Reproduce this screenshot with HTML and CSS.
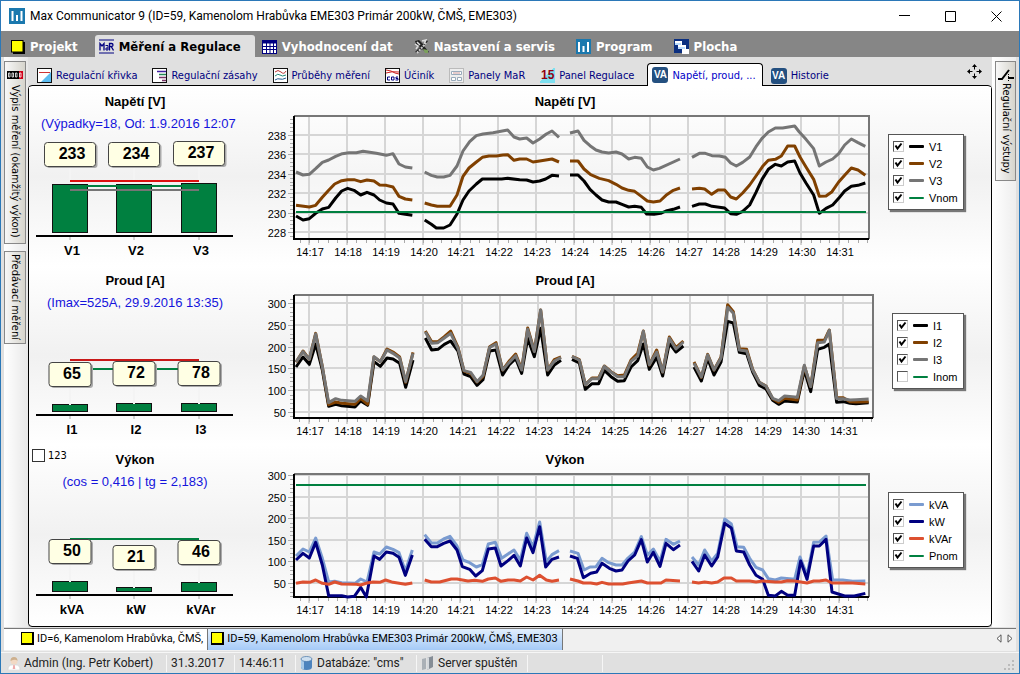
FILE: index.html
```html
<!DOCTYPE html>
<html lang="cs">
<head>
<meta charset="utf-8">
<title>Max Communicator 9</title>
<link rel="stylesheet" href="styles.css">
</head>
<body>
<div class="window">
  <header class="titlebar">
    <svg class="app-icon" viewBox="0 0 16 16"><rect width="16" height="16" fill="#1a78ae"/><path d="M3.500 3v10M8 7v6M12.500 3v10" stroke="#fff" stroke-width="2"/></svg>
    <h1>Max Communicator 9 (ID=59, Kamenolom Hrabůvka EME303 Primár 200kW, ČMŠ, EME303)</h1>
    <div class="controls">
      <button aria-label="Minimalizovat"><svg viewBox="0 0 11 11"><path d="M0 4.500h11"/></svg></button>
      <button aria-label="Maximalizovat"><svg viewBox="0 0 11 11"><path d="M.5 .5h10v10h-10z"/></svg></button>
      <button aria-label="Zavřít"><svg viewBox="0 0 11 11"><path d="M.5 .5l10 10M10.500 .5l-10 10"/></svg></button>
    </div>
  </header>

  <nav class="menu">
    <button><svg viewBox="0 0 15 15"><path d="M3 3h12v12H3z"/><rect x="1.500" y="1.500" width="11.500" height="11.500" fill="#ff0" stroke="#000"/></svg>Projekt</button>
    <button class="active"><svg viewBox="0 0 15 15"><path d="M0 1h15M0 14h15" stroke="#000080"/><path d="M1 11.500V4.500l2 2.500 2-2.500v7M10.500 11.500V4.500h2q1.500 0 1.500 1.500t-1.500 1.500h-2M12.500 8l2 3.500" stroke="#000080" stroke-width="1.300" fill="none"/><path d="M6.500 6.500H9V11H7V9h2" stroke="#000080" fill="none"/></svg>Měření a Regulace</button>
    <button><svg viewBox="0 0 15 15"><rect x=".5" y="1.500" width="14" height="13" fill="#fff" stroke="#000080"/><path d="M0 3h15" stroke="#000080" stroke-width="3"/><path d="M0 7.500h15M0 10.500h15M4.500 4v11M8 4v11M11.500 4v11" stroke="#000080"/></svg>Vyhodnocení dat</button>
    <button><svg viewBox="0 0 15 15"><path d="M1 2l4-1 4 4 3-4 2 1-4 5 5 6-2 1-5-4-4 4-3-1 5-5-4-3z" fill="#222"/><path d="M1 5l3 2-2 3M8 2l4-1-2 4M3 3l3 3" stroke="#ddd" fill="none" stroke-width="1.500"/><path d="M3 14l9-10" stroke="#ccc" stroke-width="2" stroke-dasharray="2 1"/><path d="M9 10l5 1v3h-3z" fill="#7ba05b"/></svg>Nastavení a servis</button>
    <button><svg viewBox="0 0 15 15"><rect width="15" height="15" fill="#1a78ae"/><path d="M3 3v10M7.500 7v6M12 3v10" stroke="#fff" stroke-width="2"/></svg>Program</button>
    <button><svg viewBox="0 0 15 15"><rect width="15" height="14" fill="#0b2f80"/><path d="M1 2h7v4H1zM4 6h8v4H4zM8 10h7v5H8z" fill="#fff"/><path d="M1 4h6v2H1zM4 8h7v2H4z" fill="#bdf"/></svg>Plocha</button>
  </nav>

  <main class="workspace">
    <aside class="rail rail-left">
      <button class="rail-tab tall"><svg viewBox="0 0 16 10"><rect y="1" width="13" height="8" fill="#000"/><rect x="12" y="1" width="4" height="8" fill="#d00018"/><path d="M1.500 3h1.500v4H1.500zM5 3h1.500v4H5zM8.500 3H10v4H8.500zM12.500 3H14v4h-1.500z" fill="none" stroke="#fff" stroke-width=".8"/></svg><span>Výpis měření (okamžitý výkon)</span></button>
      <button class="rail-tab"><span>Předávací měření</span></button>
    </aside>

    <section class="content">
      <nav class="tabs">
        <button><svg viewBox="0 0 15 15"><rect x=".5" y=".5" width="14" height="14" fill="#fff" stroke="#111"/><path d="M14 4v10H4z" fill="#5cbcf0"/><path d="M2 4.500h11" stroke="#c33"/></svg>Regulační křivka</button>
        <button><svg viewBox="0 0 15 15"><rect x=".5" y=".5" width="14" height="14" fill="#fff" stroke="#111"/><path d="M5 3.500h9" stroke="#4020a0" stroke-width="1.500"/><path d="M7 6.500h7" stroke="#285" stroke-width="1.500"/><path d="M7 9.500h7M10 12.500h4" stroke="#736" stroke-width="1.500"/></svg>Regulační zásahy</button>
        <button><svg viewBox="0 0 15 15"><rect x=".5" y=".5" width="14" height="14" fill="#fff" stroke="#111"/><path d="M2 4q3-3 6 0t5-1" stroke="#b33" fill="none"/><path d="M2 8q3-3 5-1t6 0" stroke="#287" fill="none"/><path d="M2 12q3-2 5-1t6-1" stroke="#235a90" fill="none"/></svg>Průběhy měření</button>
        <button><svg viewBox="0 0 15 15"><rect x=".5" y=".5" width="14" height="14" fill="#fff" stroke="#111"/><path d="M1 2l5 1 4 2 4 1M1 5q6-2 13-1" stroke="#c22" fill="none"/><path d="M5 9H2.500v3H5M6.500 9H9v3H6.500zM13 9h-2v1.500h2V12h-2.500" stroke="#000080" fill="none"/></svg>Účiník</button>
        <button><svg viewBox="0 0 15 15"><rect x=".5" y=".5" width="14" height="14" fill="#eee" stroke="#bbb"/><path d="M2.500 3.500h10v3h-10zM2.500 9.500h4v3h-4zM8.500 9.500h4v3h-4z" fill="#fff" stroke="#9ab"/><path d="M4 5h7" stroke="#c99"/></svg>Panely MaR</button>
        <button><span class="fifteen">15</span>Panel Regulace</button>
        <button class="active"><span class="va">VA</span>Napětí, proud, ...</button>
        <button><span class="va">VA</span>Historie</button>
        <button class="move" aria-label="Přesunout"><svg viewBox="0 0 15 15"><path d="M7.500 0l2.500 3H5zM7.500 15L5 12h5zM0 7.500L3 5v5zM15 7.500L12 10V5z"/><path d="M7.500 2v3.500M7.500 9.500V13M2 7.500h3.500M9.500 7.500H13" stroke="#000"/></svg></button>
      </nav>

      <div class="panel">
        <section class="row">
          <div class="bars">
            <h2>Napětí [V]</h2>
            <p class="long">(Výpadky=18, Od: 1.9.2016 12:07</p>
            <svg class="bar-chart" data-bars="voltage" viewBox="0 0 212 132"></svg>
          </div>
          <div class="trend"><h2>Napětí [V]</h2><svg class="line-chart" data-chart="voltage" viewBox="0 0 624 154"></svg></div>
          <div class="legend">
            <label><input type="checkbox" checked><i class="key black"></i>V1</label>
            <label><input type="checkbox" checked><i class="key brown"></i>V2</label>
            <label><input type="checkbox" checked><i class="key gray"></i>V3</label>
            <label><input type="checkbox" checked><i class="key green"></i>Vnom</label>
          </div>
        </section>
        <section class="row">
          <div class="bars">
            <h2>Proud [A]</h2>
            <p>(Imax=525A, 29.9.2016 13:35)</p>
            <svg class="bar-chart" data-bars="current" viewBox="0 0 212 132"></svg>
          </div>
          <div class="trend"><h2>Proud [A]</h2><svg class="line-chart" data-chart="current" viewBox="0 0 624 154"></svg></div>
          <div class="legend narrow">
            <label><input type="checkbox" checked><i class="key black"></i>I1</label>
            <label><input type="checkbox" checked><i class="key brown"></i>I2</label>
            <label><input type="checkbox" checked><i class="key gray"></i>I3</label>
            <label><input type="checkbox"><i class="key green"></i>Inom</label>
          </div>
        </section>
        <section class="row">
          <div class="bars">
            <div class="bars-head"><label class="phases"><input type="checkbox">123</label><h2>Výkon</h2></div>
            <p>(cos = 0,416 | tg = 2,183)</p>
            <svg class="bar-chart" data-bars="power" viewBox="0 0 212 132"></svg>
          </div>
          <div class="trend"><h2>Výkon</h2><svg class="line-chart" data-chart="power" viewBox="0 0 624 154"></svg></div>
          <div class="legend">
            <label><input type="checkbox" checked><i class="key sky"></i>kVA</label>
            <label><input type="checkbox" checked><i class="key navy"></i>kW</label>
            <label><input type="checkbox" checked><i class="key red"></i>kVAr</label>
            <label><input type="checkbox" checked><i class="key green"></i>Pnom</label>
          </div>
        </section>
      </div>
    </section>

    <aside class="rail rail-right">
      <button class="rail-tab"><svg viewBox="0 0 16 16"><path d="M0 13h4L11 4" stroke="#000" stroke-width="2" fill="none"/><path d="M10 12h6" stroke="#000" stroke-width="2"/><path d="M10.500 8v8" stroke="#000" stroke-dasharray="1 1"/></svg><span>Regulační výstupy</span></button>
    </aside>
  </main>

  <nav class="documents">
    <button class="doc"><i class="square"></i>ID=6, Kamenolom Hrabůvka, ČMŠ,</button>
    <button class="doc current"><i class="square"></i>ID=59, Kamenolom Hrabůvka EME303 Primár 200kW, ČMŠ, EME303</button>
    <span class="scroll">
      <button aria-label="Vlevo"><svg viewBox="0 0 6 9"><path d="M5 .8v7.400L1 4.500z"/></svg></button>
      <button aria-label="Vpravo"><svg viewBox="0 0 6 9"><path d="M1 .8v7.400l4-3.700z"/></svg></button>
    </span>
  </nav>

  <footer class="status">
    <span class="cell user"><svg viewBox="0 0 14 14"><path d="M1 14q0-5 4-5h4q4 0 4 5z" fill="#fff" stroke="#ccc" stroke-width=".5"/><circle cx="7" cy="5" r="3.500" fill="#f2d9c4"/><path d="M3.500 5q0-4 3.500-4t3.500 4q-2-2.500-7 0z" fill="#cdb08e"/><path d="M6.300 9h1.400l.6 4h-2.600z" fill="#eaa"/></svg>Admin (Ing. Petr Kobert)</span>
    <span class="cell date">31.3.2017</span>
    <span class="cell time">14:46:11</span>
    <span class="cell db"><svg viewBox="0 0 14 14"><path d="M1 3v8q0 3 5.500 3T12 11V3z" fill="#4d83bd"/><path d="M1 3v8q0 2 3 2.600V3z" fill="#a8c9e8"/><ellipse cx="6.500" cy="3" rx="5.500" ry="2.500" fill="#cfe0f0" stroke="#4474a8" stroke-width=".7"/></svg>Databáze: "cms"</span>
    <span class="cell server"><svg viewBox="0 0 14 14"><path d="M1 3l4-1v11l-4 1z" fill="#aab0b6"/><path d="M6 2l6-2v11l-6 3z" fill="#858d96"/><path d="M6 2l2-.6V13l-2 1z" fill="#d4d8dc"/></svg>Server spuštěn</span>
    <span class="cell spare"></span>
    <svg class="grip" viewBox="0 0 11 11"><path d="M8 0h2v2H8zM4 4h2v2H4zM8 4h2v2H8zM0 8h2v2H0zM4 8h2v2H4zM8 8h2v2H8z" fill="#bbb"/></svg>
  </footer>
</div>
<script src="charts.js"></script>
</body>
</html>
```

FILE: styles.css
```css
* { box-sizing: border-box; }
body { margin: 0; font: 11px "DejaVu Sans Condensed", "DejaVu Sans", sans-serif; color: #000; }
h1, h2, p { margin: 0; }
button { margin: 0; padding: 0; border: 0; background: none; font: inherit; color: inherit; white-space: nowrap; }
svg { display: block; flex: none; }

.window { display: flex; flex-direction: column; min-height: 100vh; border: 1px solid #2b78b8; background: #e0e0e0; }

.titlebar { display: flex; align-items: center; height: 30px; padding-left: 8px; gap: 5px; background: #fff; }
.app-icon { width: 16px; height: 16px; }
.titlebar h1 { flex: 1; font: 12px Roboto, sans-serif; white-space: nowrap; }
.controls { display: flex; }
.controls button { display: grid; place-items: center; width: 46px; height: 29px; }
.controls svg { width: 11px; height: 11px; fill: none; stroke: #000; }

.menu { display: flex; height: 26px; padding: 4px 0 0 5px; gap: 3px; background: #868686; }
.menu button { display: flex; align-items: center; gap: 5px; padding: 0 14px 0 4px; font-size: 13px; font-weight: bold; color: #fff; }
.menu svg { width: 15px; height: 15px; }
.menu .active { background: #e0e0e0; color: #000; border-radius: 3px 3px 0 0; }

.workspace { flex: 1; display: grid; grid-template-columns: 24px minmax(0, 1fr) 24px; padding: 0 3px; }
.rail { padding-top: 4px; background: linear-gradient(90deg, #fff, #eee); }
.rail-left { display: flex; flex-direction: column; gap: 7px; background: linear-gradient(90deg, #fff, #e8e8e8); }
.rail-right { padding-left: 3px; }
.rail-tab { display: flex; flex-direction: column; align-items: center; gap: 5px; width: 22px; height: 93px; padding-top: 2px; border: 1px solid #888; background: linear-gradient(90deg, #f8f8f8, #d6d4cc); }
.rail-tab.tall { height: 183px; padding-top: 8px; }
.rail-right .rail-tab { width: 21px; height: 120px; padding-top: 4px; gap: 1px; }
.rail-tab span { writing-mode: vertical-rl; line-height: 16px; }
.rail-tab svg { width: 16px; }

.content { display: flex; flex-direction: column; }
.tabs { display: flex; align-items: flex-end; height: 28px; padding-left: 9px; gap: 15px; color: #000080; }
.tabs button { display: flex; align-items: center; gap: 4px; height: 19px; }
.tabs svg { width: 15px; height: 15px; }
.tabs .active { position: relative; height: 23px; margin: 0 -7px -1px -2px; padding: 0 6px 0 4px; border: 1px solid #000; border-bottom: 0; border-radius: 4px 4px 0 0; background: #fff; color: #0000c8; }
.tabs .move { margin: 0 10px 4px auto; }
.va { width: 16px; height: 16px; border-radius: 3px; background: #245080; color: #fff; font: bold 10px/16px "Liberation Sans", sans-serif; text-align: center; }
.fifteen { width: 15px; height: 15px; background: linear-gradient(135deg, #e0e0e0 45%, #7de0f0 46%); color: #900010; font: bold 12px/15px "Liberation Sans", sans-serif; text-align: center; }

.panel { flex: 1; padding: 1px 0 2px; border: 1px solid #000; border-radius: 4px; background: #fff; }
.row { display: grid; grid-template-columns: 212px minmax(0, 1fr) 114px; background: linear-gradient(#fff, #f1f1f1 50%, #fff); }
.row h2 { padding-top: 5px; font: bold 13px/20px "Liberation Sans", sans-serif; text-align: center; }
.bars { font: 13px/20px "Liberation Sans", sans-serif; }
.bars p { padding-top: 2px; color: #1414dc; text-align: center; white-space: nowrap; }
.bars .long { padding-left: 12px; text-align: left; }
.bars-head { display: grid; }
.bars-head > * { grid-area: 1 / 1; }
.phases { display: flex; align-items: center; justify-self: start; gap: 3px; padding-left: 3px; height: 20px; font: 11px "DejaVu Sans Condensed", sans-serif; }
.phases input { appearance: none; width: 13px; height: 13px; margin: 0; border: 1px solid #333; background: #fff; }
.bar-chart { width: 100%; }
.trend { padding-left: 12px; }
.line-chart { width: 100%; }

.legend { justify-self: end; align-self: start; width: 76px; margin: 47px 27px 0 0; padding: 3px 4px; border: 1px solid #555; background: #fff; box-shadow: 2px 2px 1px #777; font: 11px "Liberation Sans", sans-serif; }
.legend.narrow { width: 72px; }
.legend label { display: flex; align-items: center; height: 17px; gap: 5px; }
.legend input { appearance: none; width: 11px; height: 11px; margin: 0; border: 1px solid #ccc; border-top-color: #555; border-left-color: #555; }
.legend input:checked { background: url("data:image/svg+xml,%3Csvg xmlns='http://www.w3.org/2000/svg' viewBox='0 0 9 9'%3E%3Cpath d='M1.500 3.500l2 3 4-5' fill='none' stroke='%23000' stroke-width='2'/%3E%3C/svg%3E"); }
.key { width: 15px; height: 3px; border-radius: 1px; }
.black { background: #000; }
.brown { background: #804000; }
.gray { background: #757575; }
.green { height: 2px; background: #008040; }
.sky { background: #7a9bd0; }
.navy { background: #000080; }
.red { background: #dd5030; }

.documents { display: flex; height: 23px; margin: 1px 3px 0; border-top: 1px solid #777; background: #f0f0f0; }
.doc { display: flex; align-items: center; gap: 3px; height: 21px; padding: 0 4px 2px 3px; border-right: 1px solid #777; background: #fff; font: 11px Roboto, sans-serif; }
.doc:first-child { padding-left: 17px; }
.doc.current { background: linear-gradient(#e2effd, #a5caf7); }
.square { width: 13px; height: 13px; border: 1px solid #000; border-width: 1px 2px 2px 1px; background: #ff0; }
.scroll { display: flex; gap: 5px; margin-left: auto; padding: 0 3px 4px; }
.scroll svg { width: 6px; height: 9px; fill: #fff; stroke: #555; }

.status { display: flex; align-items: center; height: 21px; margin-top: 1px; border-top: 1px solid #f6f6f6; font: 12px Roboto, sans-serif; color: #222; }
.cell { display: flex; align-items: center; gap: 3px; height: 17px; padding-left: 4px; border-right: 1px solid #f6f6f6; white-space: nowrap; }
.cell svg { width: 14px; height: 14px; }
.user { width: 166px; padding-left: 6px; }
.date { width: 68px; }
.time { width: 61px; }
.db { width: 121px; }
.server { width: 111px; }
.spare { width: 75px; }
.grip { width: 11px; margin: 4px 4px 0 auto; }

.bar { fill: #008040; stroke: #111; }
.axis { stroke: #000; stroke-width: 2; fill: none; }
.tick { stroke: #aaa; fill: none; }
.pole { stroke: #f4f4f4; stroke-width: 2; }
.box-shadow { fill: #aaa; }
.box { fill: #ffffe4; stroke: #444; }
.value { font: bold 16px "Liberation Sans", sans-serif; text-anchor: middle; }
.name { font: bold 13px "Liberation Sans", sans-serif; text-anchor: middle; }
.limit { stroke-width: 2; fill: none; }
.grid { stroke: #d6d6d6; stroke-width: 2; fill: none; }
.plot-bg { fill: #fff; fill-opacity: .35; }
.frame { stroke: #777; stroke-width: 2; fill: none; }
.scale { font: 11px "Liberation Sans", sans-serif; }
.scale-x { text-anchor: middle; }
.scale-y { text-anchor: end; }
.series { fill: none; stroke-width: 9; stroke-linejoin: round; stroke-linecap: butt; }
```

FILE: charts.js
```js
const GREEN = "#008040", RED = "#dd1010", GRAY = "#757575", BROWN = "#804000";
const SLOTS = [41, 105, 170];

const bars = {
  voltage: {
    names: ["V1", "V2", "V3"], values: [233, 234, 237], boxWidth: 51,
    boxTop: [8, 8, 7], barTop: [51, 51, 50], floor: 99,
    limits: [[47, RED], [52, GREEN], [56, GRAY]], front: true
  },
  current: {
    names: ["I1", "I2", "I3"], values: [65, 72, 78], boxWidth: 42,
    boxTop: [49, 48, 48], barTop: [92, 91, 91], floor: 99,
    limits: [[47, "#c81818"], [56, GREEN]]
  },
  power: {
    names: ["kVA", "kW", "kVAr"], values: [50, 21, 46], boxWidth: 42,
    boxTop: [47, 53, 48], barTop: [90, 96, 91], floor: 100,
    limits: [[47, GREEN]]
  }
};

// Traces are stored in thirds of a unit; the second pair of runs counts from 14:24.
const charts = {
  voltage: {
    right: 616, pitch: 37.85, top: 4, dy: -66,
    labels: [238, 236, 234, 232, 230, 228], y0: 23, dyLabel: 19.4,
    series: [
      ["#000", ["109,378 130,390 149,386 168,370 188,357 207,352 228,324 246,303 264,295 283,301 303,315 322,307 343,315 360,330 380,339 400,342 418,370 437,373 458,376", "495,390 515,403 530,414 552,414 571,405 592,372 610,330 628,303 650,282 668,267 726,267 744,265 780,269 801,270 820,276 840,273 858,267 877,256 898,258"],
        ["2,255 26,255 44,273 62,298 80,315 98,330 118,336 140,336 158,343 178,351 196,349 216,352 232,372 254,373 274,370 290,363 312,358 332,351", "368,349 390,342 408,342 428,349 466,354 484,371 501,373 520,364 541,345 560,307 578,268 597,238 618,223 636,228 655,216 676,213 692,249 710,279 733,315 750,370 770,355 790,345 808,325 826,303 846,289 866,286 888,279"]],
      [BROWN, ["109,346 149,351 168,346 188,322 207,301 225,282 246,272 264,269 283,269 303,275 322,270 343,273 360,285 380,286 400,291 418,319 437,327 458,330", "495,339 515,345 533,349 571,349 592,315 610,259 628,234 650,216 668,202 688,198 710,198 730,195 744,194 763,211 780,207 801,207 820,216 840,213 877,207 898,216"],
        ["2,213 26,213 44,237 64,254 90,265 118,272 140,283 158,294 178,301 196,304 216,319 234,333 252,336 272,333 290,316 312,301 332,294", "368,297 390,295 406,297 427,313 446,300 466,300 484,321 501,327 520,309 541,285 560,258 580,229 597,211 618,208 636,198 655,168 676,168 692,201 710,231 733,268 750,319 770,318 788,305 808,276 826,256 846,234 866,240 888,256"]],
      [GRAY, ["109,246 130,255 149,253 168,236 188,217 207,210 228,199 248,191 268,188 290,188 310,184 330,187 350,190 380,196 400,191 418,222 437,231 458,234", "495,246 515,256 533,261 552,261 571,256 592,228 610,183 630,155 650,137 670,132 700,128 744,120 763,141 780,147 801,144 820,159 840,147 860,132 877,123 898,142"],
        ["2,129 26,123 44,151 62,167 80,180 98,186 118,189 140,186 158,192 178,207 196,202 216,205 234,231 252,240 270,235 332,207", "368,202 390,190 408,190 428,197 450,198 468,202 484,219 501,228 520,217 541,201 560,170 578,145 597,126 618,114 640,114 676,108 690,126 710,148 733,176 750,228 770,216 790,207 808,191 826,165 846,147 866,158 888,169"]]
    ],
    nominal: 100
  },
  current: {
    right: 620, pitch: 38.13, top: 4, dy: -63,
    labels: [300, 250, 200, 150, 100, 50], y0: 12, dyLabel: 21.8,
    series: [
      ["#000", ["109,291 130,261 149,283 168,222 188,300 207,409 228,403 246,407 286,411 303,393 324,406 343,275 362,289 382,264 400,267 420,280 438,352 460,270", "497,204 516,240 535,238 554,223 573,213 595,243 613,312 633,320 652,346 670,329 690,243 709,240 729,315 748,285 768,265 786,310 804,205 824,260 843,175 864,315 884,285 904,271"],
        ["8,268 30,279 48,358 68,341 88,341 105,301 125,320 145,334 165,332 185,291 205,272 222,222 240,298 262,262 280,318 300,219 320,246 342,228", "374,291 396,333 415,266 434,315 455,276 475,154 492,159 510,247 532,251 550,306 570,346 590,357 610,391 628,403 646,393 684,396 705,300 724,365 745,238 765,232 780,222 802,397 822,395 842,400 860,401 898,398"]],
      [BROWN, ["109,277 130,243 149,268 168,190 188,290 207,404 228,396 246,400 286,403 303,385 324,403 343,261 362,275 382,237 400,246 420,261 438,337 460,247", "497,183 516,215 535,215 554,200 573,183 595,232 613,303 633,310 652,336 670,320 690,230 709,218 729,300 748,274 768,252 786,298 804,174 824,243 843,120 864,300 884,269 904,261"],
        ["8,259 30,269 48,344 68,324 88,324 105,288 125,305 145,317 165,315 185,270 205,250 222,183 240,285 262,240 280,306 300,201 320,233 342,213", "374,276 396,322 415,253 434,300 455,262 475,104 492,125 510,236 532,238 550,298 570,337 590,348 610,386 628,397 646,385 684,390 705,288 724,350 745,211 765,211 780,180 802,383 822,383 842,395 860,396 898,395"]],
      [GRAY, ["109,276 130,245 149,268 168,192 188,290 207,398 228,386 246,391 286,394 303,378 324,393 343,260 362,275 382,240 400,250 420,264 438,335 460,250", "497,186 516,220 535,218 554,204 573,190 595,235 613,302 633,307 652,335 670,316 690,232 709,222 729,300 748,278 768,257 786,300 804,178 824,245 843,120 864,300 884,273 904,263"],
        ["8,260 30,270 48,344 68,326 88,326 105,289 125,306 145,320 165,320 185,274 205,258 222,184 240,284 262,246 280,306 300,205 320,237 342,216", "374,280 396,321 415,255 434,300 455,264 475,112 492,130 510,240 532,243 550,300 570,337 590,349 610,385 628,392 646,378 684,382 705,286 724,350 745,218 765,216 780,181 802,386 822,386 842,390 860,389 898,387"]]
    ]
  },
  power: {
    right: 616, pitch: 37.85, top: 4, dy: -60,
    labels: [300, 250, 200, 150, 100, 50], y0: 5, dyLabel: 21.6,
    series: [
      ["#7a9bd0", ["109,318 130,297 149,306 168,264 188,325 207,396 225,394 246,398 286,400 303,387 322,396 343,306 360,312 380,291 400,298 418,308 437,363 458,300", "495,254 515,279 533,279 552,267 571,259 592,288 610,330 630,338 650,351 668,344 686,282 707,277 726,325 745,312 763,300 782,330 801,250 820,291 840,216 860,335 877,314 898,302"],
        ["2,303 26,310 44,360 62,351 80,350 98,325 118,338 140,345 158,345 176,324 196,306 216,260 234,315 252,297 272,334 290,268 312,283 332,273", "368,321 388,345 406,300 427,333 445,310 466,207 486,222 503,290 523,292 541,325 560,352 580,360 597,386 618,390 636,384 676,388 692,321 713,375 733,277 750,276 770,258 790,390 820,390 850,394 888,393"]],
      ["#000080", ["109,330 130,310 149,324 168,277 188,345 207,437 246,437 264,441 284,439 303,412 320,441 343,318 360,328 380,306 400,310 418,322 437,376 458,315", "495,268 515,290 533,290 552,280 571,273 592,300 608,350 630,358 648,378 668,362 686,297 707,294 724,348 745,332 763,316 782,348 801,264 820,308 840,230 858,351 877,328 898,321"],
        ["2,318 24,325 42,383 64,370 82,366 98,340 120,355 140,363 158,360 176,333 196,315 216,269 234,336 252,307 272,349 290,280 312,299 332,285", "368,334 388,363 406,315 427,348 445,321 466,220 486,234 501,303 523,306 541,345 560,376 580,388 597,436 618,438 636,424 655,436 676,436 694,333 713,388 733,288 750,288 770,268 788,426 826,438 855,438 888,430"]],
      ["#dd5030", ["109,400 130,396 150,397 168,390 188,400 207,403 225,396 246,402 290,403 303,405 322,399 340,396 360,397 378,390 400,397 437,403 458,399", "495,390 515,396 540,396 575,387 592,387 625,393 645,391 668,394 686,387 707,384 724,394 745,390 763,390 782,393 801,381 820,390 840,376 860,390 877,394 898,390"],
        ["2,387 26,393 42,399 64,399 82,402 98,397 118,402 160,402 176,399 196,396 216,393 234,399 275,399 290,390 332,393", "368,396 388,399 406,396 427,399 445,396 464,384 486,384 501,393 541,393 560,396 580,393 618,396 636,396 655,392 676,393 713,399 733,393 750,393 770,390 788,399 850,399 888,402"]]
    ],
    nominal: 15
  }
};

function drawBars(svg, d) {
  const limits = d.limits.map(([y, c]) => `<path class="limit" stroke="${c}" d="M41 ${y}H170"/>`).join("");
  let out = d.front ? "" : limits;
  SLOTS.forEach((x, i) => {
    out += `<rect class="bar" x="${x - 17.5}" y="${d.barTop[i] - .5}" width="35" height="${d.floor - d.barTop[i]}"/>`;
  });
  if (d.front) out += limits;
  out += `<path class="axis" d="M7 ${d.floor + 3}H204"/>`;
  SLOTS.forEach((x, i) => {
    const w = d.boxWidth, y = d.boxTop[i], left = x - w / 2;
    const poleEnd = d.front ? d.limits[0][0] - 1 : d.barTop[i];
    out += `<path class="pole" d="M${x} ${y + 24}V${poleEnd}"/>
      <path class="tick" d="M${x} ${d.floor + 4}v3"/>
      <rect class="box-shadow" x="${left + 2}" y="${y + 2}" width="${w}" height="24" rx="3"/>
      <rect class="box" x="${left}" y="${y + .5}" width="${w}" height="24" rx="3"/>
      <text class="value" x="${x + 2}" y="${y + 17}">${d.values[i]}</text>
      <text class="name" x="${x + 2}" y="${d.floor + 22}">${d.names[i]}</text>`;
  });
  svg.innerHTML = out;
}

function drawTrend(svg, d) {
  const left = 41, bottom = 127, firstX = 56;
  let out = `<rect class="plot-bg" x="${left}" y="${d.top}" width="${d.right - left}" height="${bottom - d.top}"/>`;
  const minor = d.dyLabel / 5;
  d.labels.forEach((t, i) => {
    const y = Math.round(d.y0 + i * d.dyLabel);
    out += `<path class="grid" d="M${left} ${y}H${d.right}"/><path class="tick" d="M35 ${y + .5}h5"/>
      <text class="scale scale-y" x="33" y="${y + 5}">${t}</text>`;
  });
  for (let y = d.y0 % minor + minor; y < bottom; y += minor) {
    if (y > d.top) out += `<path class="tick" d="M37 ${Math.round(y) + .5}h3"/>`;
  }
  for (let i = 0; i < 15; i++) {
    const x = Math.round(firstX + i * d.pitch);
    out += `<path class="grid" d="M${x} ${d.top}V${bottom}"/><path class="tick" d="M${x} ${bottom}v6"/>
      <text class="scale scale-x" x="${x + 1}" y="144">14:${17 + i}</text>`;
  }
  for (let x = firstX - d.pitch / 4; x < d.right; x += d.pitch / 4) {
    out += `<path class="tick" d="M${Math.round(x) + .5} ${bottom}v4"/>`;
  }
  out += `<path class="frame" d="M${left} ${d.top}H${d.right}V${bottom}"/>
    <path class="axis" d="M${left} ${d.top}V${bottom}H${d.right}"/>`;
  d.series.forEach(([color, early, late]) => {
    [[early, 20], [late, 949]].forEach(([runs, dx]) => runs.forEach(points => {
      out += `<polyline class="series" stroke="${color}" transform="scale(${1 / 3}) translate(${dx} ${d.dy})" points="${points}"/>`;
    }));
  });
  if (d.nominal) out += `<path class="limit" stroke="${GREEN}" d="M43 ${d.nominal}H613"/>`;
  svg.innerHTML = out;
}

document.querySelectorAll("[data-bars]").forEach(s => drawBars(s, bars[s.dataset.bars]));
document.querySelectorAll("[data-chart]").forEach(s => drawTrend(s, charts[s.dataset.chart]));
```
